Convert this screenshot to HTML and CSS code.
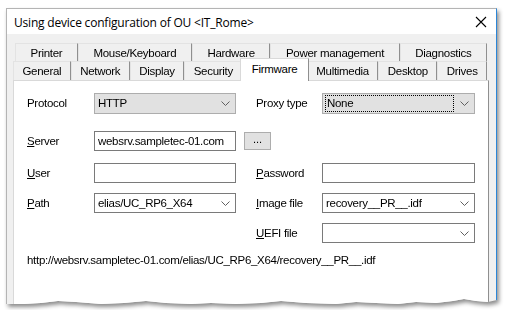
FILE: index.html
```html
<!DOCTYPE html>
<html lang="en">
<head>
    <meta charset="UTF-8">
    <title>Using device configuration of OU</title>
    <link rel="stylesheet" href="styles.css">
</head>
<body>

    <div class="frame">
        <div class="window">
            <div class="titlebar">
                <span class="title">Using device configuration of OU &lt;IT_Rome&gt;</span>
                <svg class="close" width="12" height="12" viewBox="0 0 12 12">
                    <path d="M1 1 L11 11 M11 1 L1 11" stroke="#000" stroke-width="1.1" fill="none"/>
                </svg>
            </div>

            <div class="client">
                <div class="tabs">
                    <div class="tab-row back">
                        <div class="tab">Printer</div>
                        <div class="tab">Mouse/Keyboard</div>
                        <div class="tab">Hardware</div>
                        <div class="tab">Power management</div>
                        <div class="tab">Diagnostics</div>
                    </div>
                    <div class="tab-row front">
                        <div class="tab">General</div>
                        <div class="tab">Network</div>
                        <div class="tab">Display</div>
                        <div class="tab">Security</div>
                        <div class="tab active">Firmware</div>
                        <div class="tab">Multimedia</div>
                        <div class="tab">Desktop</div>
                        <div class="tab">Drives</div>
                    </div>
                </div>

                <div class="panel">
                    <div class="form">
                        <div class="label">Protocol</div>
                        <div class="combo readonly"><span class="value">HTTP</span><svg class="arrow" width="9" height="5" viewBox="0 0 9 5"><path d="M0.5 0.5 L4.5 4.5 L8.5 0.5" stroke="#606060" fill="none"/></svg></div>
                        <div></div>
                        <div class="label right">Proxy type</div>
                        <div class="combo readonly"><span class="value focus">None</span><svg class="arrow" width="9" height="5" viewBox="0 0 9 5"><path d="M0.5 0.5 L4.5 4.5 L8.5 0.5" stroke="#606060" fill="none"/></svg></div>

                        <div class="label"><u>S</u>erver</div>
                        <div class="field">websrv.sampletec-01.com</div>
                        <div></div>
                        <div class="cell"><button class="dots" type="button">...</button></div>
                        <div></div>

                        <div class="label"><u>U</u>ser</div>
                        <div class="field"></div>
                        <div></div>
                        <div class="label right"><u>P</u>assword</div>
                        <div class="field"></div>

                        <div class="label"><u>P</u>ath</div>
                        <div class="combo"><span class="value">elias/UC_RP6_X64</span><svg class="arrow" width="9" height="5" viewBox="0 0 9 5"><path d="M0.5 0.5 L4.5 4.5 L8.5 0.5" stroke="#606060" fill="none"/></svg></div>
                        <div></div>
                        <div class="label right"><u>I</u>mage file</div>
                        <div class="combo"><span class="value">recovery__PR__.idf</span><svg class="arrow" width="9" height="5" viewBox="0 0 9 5"><path d="M0.5 0.5 L4.5 4.5 L8.5 0.5" stroke="#606060" fill="none"/></svg></div>

                        <div></div>
                        <div></div>
                        <div></div>
                        <div class="label right"><u>U</u>EFI file</div>
                        <div class="combo"><span class="value"></span><svg class="arrow" width="9" height="5" viewBox="0 0 9 5"><path d="M0.5 0.5 L4.5 4.5 L8.5 0.5" stroke="#606060" fill="none"/></svg></div>
                    </div>

                    <div class="url">http://websrv.sampletec-01.com/elias/UC_RP6_X64/recovery__PR__.idf</div>
                </div>
            </div>
        </div>
    </div>

</body>
</html>
```

FILE: styles.css
```css
body {
    margin: 0;
    padding: 0;
    background-color: #fff;
    font-family: 'Liberation Sans', Arial, sans-serif;
    color: #000;
    overflow: hidden;
}

.frame {
    margin: 8px 0 0 6px;
    width: 491px;
    filter: drop-shadow(2px 3px 2px rgba(0, 0, 0, 0.45));
}

.window {
    height: 302px;
    background-color: #f0f0f0;
    border-left: 1px solid #b4b4b4;
    border-top: 1px solid #b4b4b4;
    border-right: 1px solid #2b86d8;
    box-sizing: border-box;
    display: flex;
    flex-direction: column;
    clip-path: polygon(0 0, 100% 0, 100% 292px, 482px 294px, 470px 293px, 458px 291px, 447px 293px, 430px 295px,
        410px 294px, 392px 296px, 370px 295px, 350px 294px, 330px 296px, 300px 295px, 275px 293px, 255px 295px,
        230px 296px, 205px 295px, 185px 296px, 160px 295px, 140px 293px, 118px 295px, 95px 296px, 70px 294px,
        52px 293px, 35px 295px, 18px 296px, 0 296px);
}

.titlebar {
    height: 25px;
    background-color: #fff;
    display: flex;
    align-items: center;
    justify-content: space-between;
    padding: 0 9px 0 7px;
    flex-shrink: 0;
}

.title {
    font-family: 'Open Sans', 'Noto Sans', sans-serif;
    font-size: 12px;
    letter-spacing: -0.2px;
    margin-top: 1px;
}

.close {
    display: block;
    margin-top: 1px;
}

.client {
    flex: 1;
    padding: 9px 7px 0 6px;
    display: flex;
    flex-direction: column;
}

.tabs {
    font-size: 11.5px;
    letter-spacing: -0.3px;
}

.tab-row {
    display: flex;
}

.tab-row.back {
    margin: 0 2px;
    height: 18px;
}

.tab-row.front {
    height: 19px;
    margin-right: 2px;
}

.tab {
    flex: 1 1 auto;
    padding: 1px 3px 0 3px;
    text-align: center;
    line-height: 17px;
    background-color: #f0f0f0;
    border-top: 1px solid #e3e3e3;
    border-left: 1px solid #e3e3e3;
    border-right: 1px solid #8f8f8f;
    white-space: nowrap;
}

.tab.active {
    position: relative;
    z-index: 1;
    background-color: #fff;
    margin: -3px -2px 0 -2px;
    height: 22px;
    line-height: 21px;
    border-top-color: #d9d9d9;
    border-left-color: #d9d9d9;
    padding: 0 5px;
}

.panel {
    flex: 1;
    background-color: #fff;
    border-top: 1px solid #d9d9d9;
    border-left: 1px solid #d9d9d9;
    border-right: 1px solid #8f8f8f;
    padding: 12px 0 0 13px;
    font-size: 11.5px;
    letter-spacing: -0.3px;
}

.form {
    display: grid;
    grid-template-columns: 67px 142px 8px 78px 153px;
    grid-template-rows: 38px 32px 30px 30px 20px;
    align-items: start;
}

.label {
    height: 20px;
    line-height: 20px;
    white-space: nowrap;
}

.label.right {
    padding-left: 12px;
}

.combo, .field {
    height: 20px;
    box-sizing: border-box;
    border: 1px solid #7a7a7a;
    background-color: #fff;
    display: flex;
    align-items: center;
    padding-left: 3px;
    white-space: nowrap;
    overflow: hidden;
}

.combo.readonly {
    height: 21px;
    background-color: #e1e1e1;
    border-color: #adadad;
}

.value {
    flex: 1;
    line-height: 15px;
}

.value.focus {
    border: 1px dotted #000;
    margin: 0 0 0 -1px;
    padding-left: 1px;
}

.arrow {
    display: block;
    margin: 0 5px 0 6px;
}

.dots {
    display: block;
    width: 27px;
    height: 18px;
    padding: 0 0 4px 0;
    margin: 1px 0 0 0;
    background-color: #e1e1e1;
    border: 1px solid #adadad;
    font-family: 'Liberation Sans', Arial, sans-serif;
    font-size: 11px;
    text-align: center;
    line-height: 10px;
}

.url {
    margin-top: 10px;
    line-height: 14px;
    white-space: nowrap;
}
```
